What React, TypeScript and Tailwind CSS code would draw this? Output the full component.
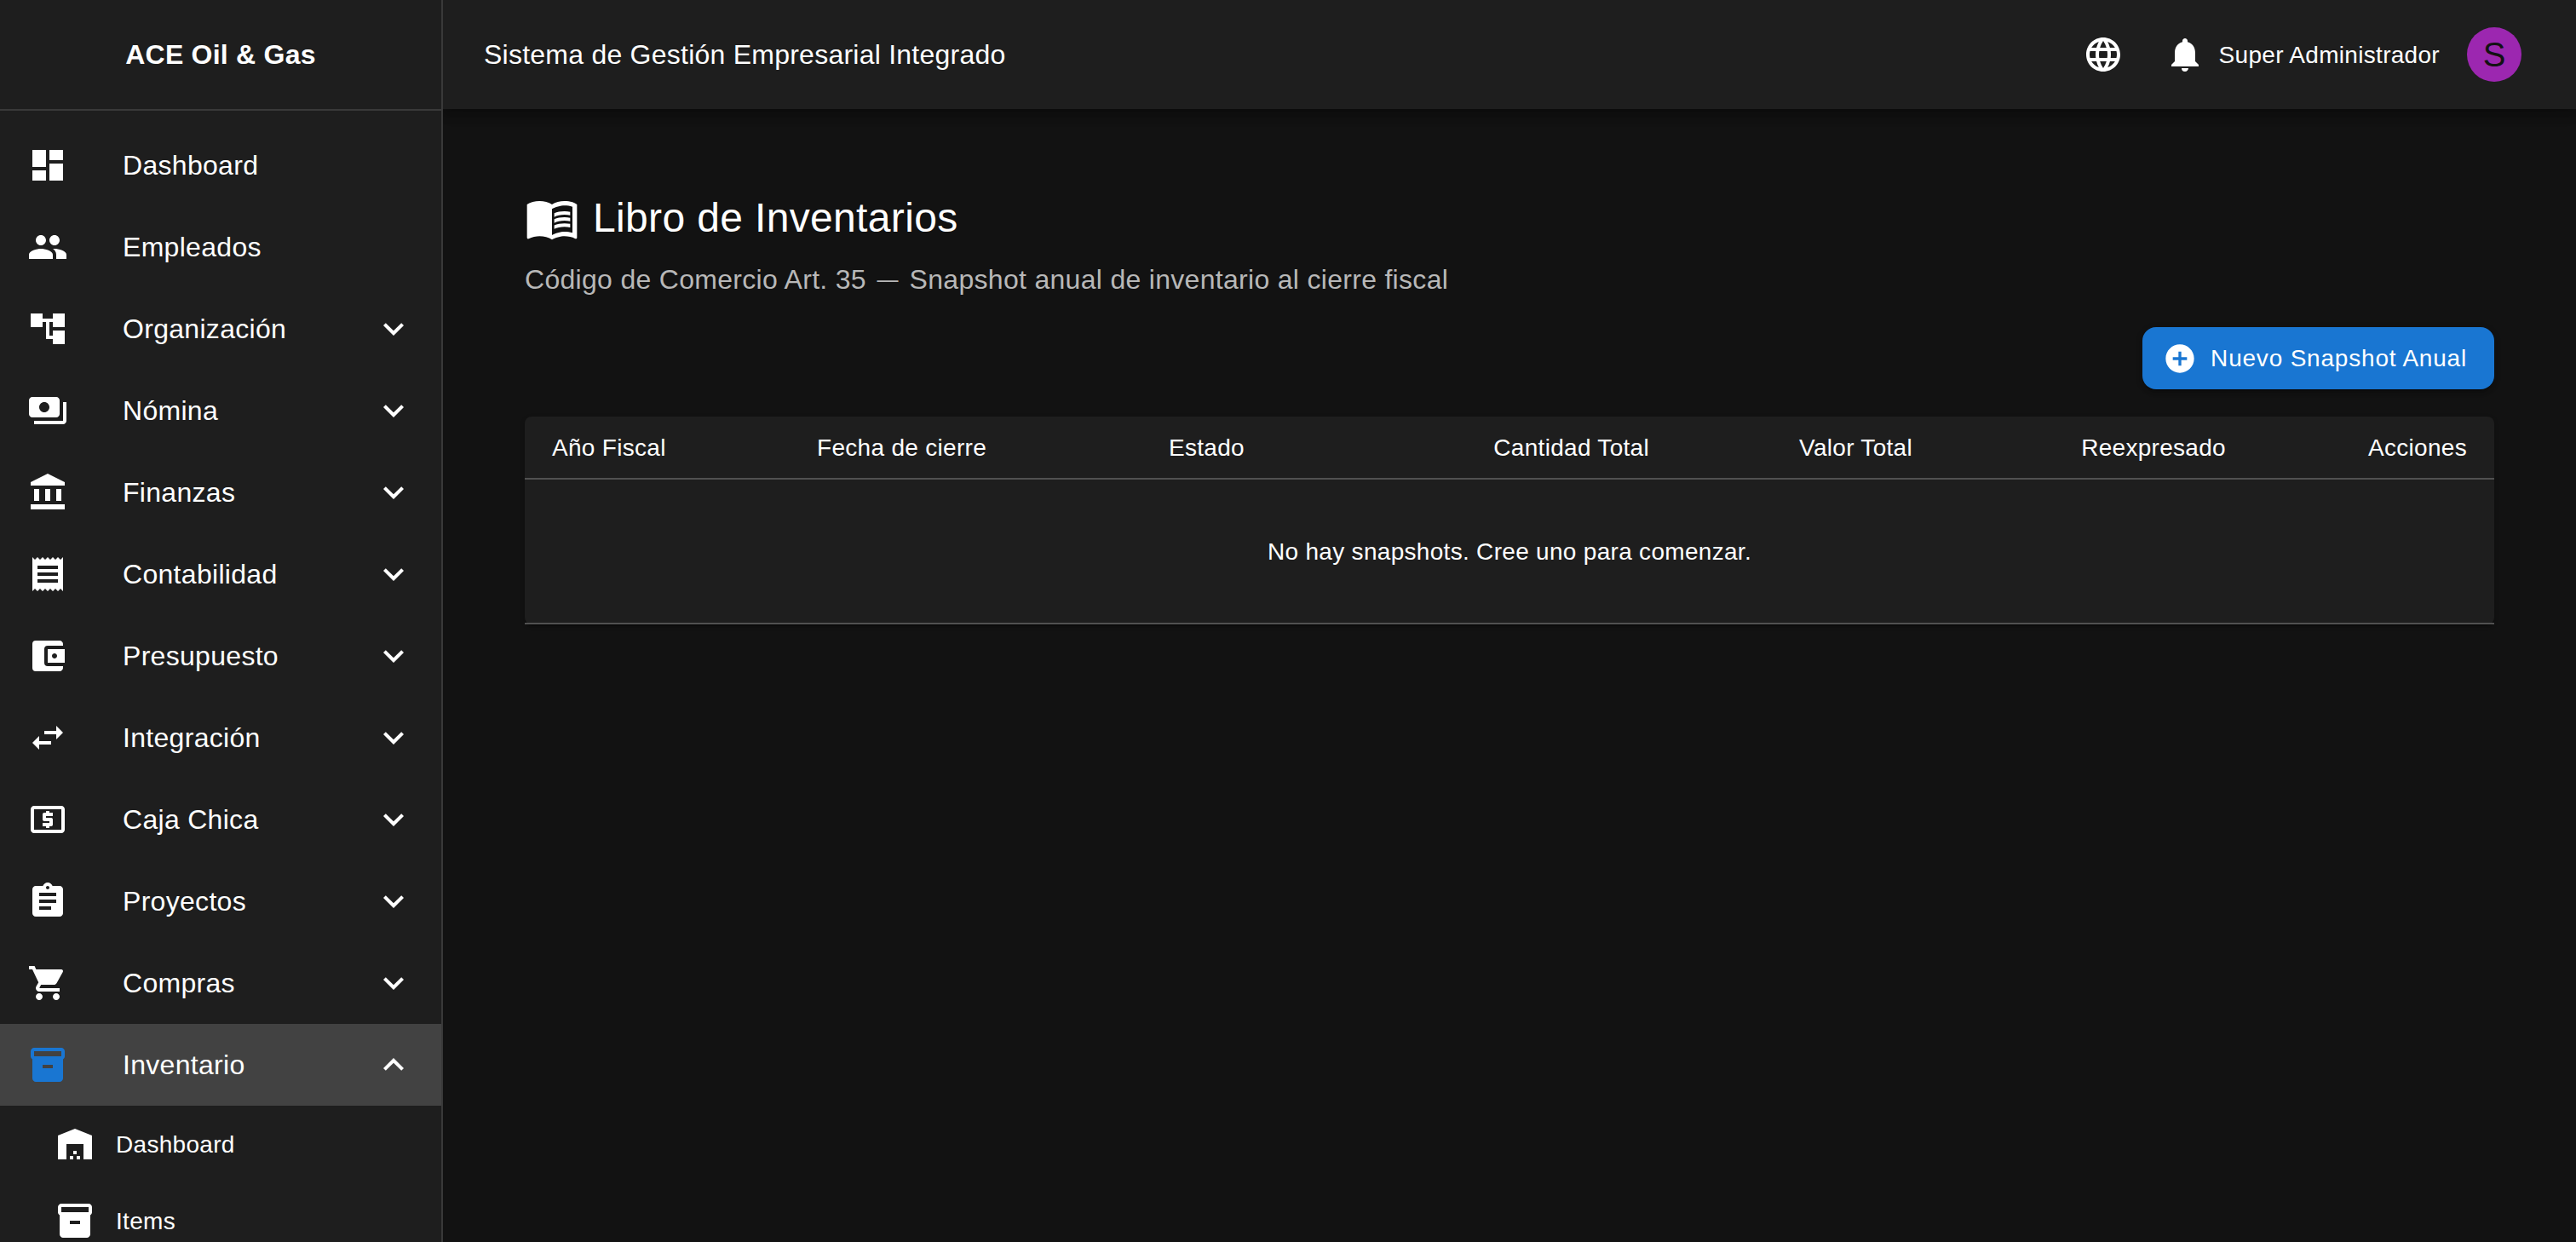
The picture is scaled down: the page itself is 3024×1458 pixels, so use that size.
import {
    MdAccountBalance,
    MdAccountBalanceWallet,
    MdAccountTree,
    MdAddCircle,
    MdAssignment,
    MdDashboard,
    MdExpandLess,
    MdExpandMore,
    MdInventory2,
    MdLanguage,
    MdLocalAtm,
    MdNotifications,
    MdPayments,
    MdPeople,
    MdReceipt,
    MdShoppingCart,
    MdSwapHoriz,
    MdWarehouse,
} from "react-icons/md";

const menu = [
    { label: "Dashboard", icon: MdDashboard },
    { label: "Empleados", icon: MdPeople },
    { label: "Organización", icon: MdAccountTree, expandable: true },
    { label: "Nómina", icon: MdPayments, expandable: true },
    { label: "Finanzas", icon: MdAccountBalance, expandable: true },
    { label: "Contabilidad", icon: MdReceipt, expandable: true },
    { label: "Presupuesto", icon: MdAccountBalanceWallet, expandable: true },
    { label: "Integración", icon: MdSwapHoriz, expandable: true },
    { label: "Caja Chica", icon: MdLocalAtm, expandable: true },
    { label: "Proyectos", icon: MdAssignment, expandable: true },
    { label: "Compras", icon: MdShoppingCart, expandable: true },
    { label: "Inventario", icon: MdInventory2, expandable: true, open: true },
];

const subMenu = [
    { label: "Dashboard", icon: MdWarehouse },
    { label: "Items", icon: MdInventory2 },
];

const columns = [
    { label: "Año Fiscal", className: "w-[311px] text-left" },
    { label: "Fecha de cierre", className: "w-[413px] text-left" },
    { label: "Estado", className: "w-[260px] text-left" },
    { label: "Cantidad Total", className: "w-[368px] text-right" },
    { label: "Valor Total", className: "w-[309px] text-right" },
    { label: "Reexpresado", className: "w-[368px] text-right" },
    { label: "Acciones", className: "w-[283px] text-right" },
];

// Open book with a solid left page
function BookIcon({ className }: { className?: string }) {
    return (
        <svg viewBox="0 0 24 24" fill="currentColor" className={className}>
            <path d="M21 5c-1.11-.35-2.33-.5-3.5-.5-1.95 0-4.05.4-5.5 1.5-1.45-1.1-3.55-1.5-5.5-1.5S2.45 4.9 1 6v14.65c0 .25.25.5.5.5.1 0 .15-.05.25-.05C3.1 20.45 5.05 20 6.5 20c1.95 0 4.05.4 5.5 1.5 1.35-.85 3.8-1.5 5.5-1.5 1.65 0 3.35.3 4.75 1.05.1.05.15.05.25.05.25 0 .5-.25.5-.5V6c-.6-.45-1.25-.75-2-1zm0 13.5c-1.1-.35-2.3-.5-3.5-.5-1.7 0-4.15.65-5.5 1.5V8c1.35-.85 3.8-1.5 5.5-1.5 1.2 0 2.4.15 3.5.5v11.5z" />
            <path d="M17.5 10.5c.88 0 1.73.09 2.5.26V9.24c-.79-.15-1.64-.24-2.5-.24-1.7 0-3.24.29-4.5.83v1.66c1.13-.64 2.7-.99 4.5-.99zM13 12.49v1.66c1.13-.64 2.7-.99 4.5-.99.88 0 1.73.09 2.5.26V11.9c-.79-.15-1.64-.24-2.5-.24-1.7 0-3.24.3-4.5.83zM17.5 14.33c-1.7 0-3.24.29-4.5.83v1.66c1.13-.64 2.7-.99 4.5-.99.88 0 1.73.09 2.5.26v-1.52c-.79-.16-1.64-.24-2.5-.24z" />
        </svg>
    );
}

function Sidebar() {
    return (
        <aside className="relative z-20 flex h-full w-[520px] shrink-0 flex-col overflow-hidden border-r-2 border-[#393939] bg-[#1e1e1e]">
            <div className="flex h-[130px] shrink-0 items-center justify-center border-b-2 border-[#393939]">
                <span className="text-[32px] leading-[51px] font-bold tracking-[0.24px]">ACE Oil &amp; Gas</span>
            </div>
            <nav className="pt-4">
                {menu.map(({ label, icon: Icon, expandable, open }) => (
                    <div
                        key={label}
                        className={`flex h-24 cursor-pointer items-center px-8 ${open ? "bg-[#424242]" : ""}`}
                    >
                        <div className="w-28">
                            <Icon className={`size-12 ${open ? "text-[#1976d2]" : ""}`} />
                        </div>
                        <span className="flex-1 text-[32px] leading-[48px] tracking-[0.3px]">{label}</span>
                        {expandable && (open ? <MdExpandLess className="size-12" /> : <MdExpandMore className="size-12" />)}
                    </div>
                ))}
                {/* Inventario submenu */}
                {subMenu.map(({ label, icon: Icon }) => (
                    <div key={label} className="flex h-[90px] cursor-pointer items-center pr-8 pl-16">
                        <div className="w-[72px]">
                            <Icon className="size-12" />
                        </div>
                        <span className="pt-0.5 text-[28px] leading-[40px] tracking-[0.3px]">{label}</span>
                    </div>
                ))}
            </nav>
        </aside>
    );
}

function TopBar() {
    return (
        <header className="relative z-10 flex h-32 shrink-0 items-center bg-[#1e1e1e] pr-16 pl-12 shadow-[0_4px_8px_-2px_rgba(0,0,0,0.2),0_8px_10px_0_rgba(0,0,0,0.14),0_2px_20px_0_rgba(0,0,0,0.12)]">
            <h1 className="flex-1 text-[32px] leading-[51px] tracking-[0.24px]">Sistema de Gestión Empresarial Integrado</h1>
            <button className="mr-4 p-4">
                <MdLanguage className="size-12" />
            </button>
            <button className="p-4">
                <MdNotifications className="size-12" />
            </button>
            <span className="mr-8 pt-0.5 text-[28px] leading-[40px] tracking-[0.3px]">Super Administrador</span>
            <div className="flex size-16 items-center justify-center rounded-full bg-[#9c27b0] text-[40px] leading-none text-[#121212]">
                S
            </div>
        </header>
    );
}

function SnapshotTable() {
    return (
        <div className="rounded-lg bg-[#1e1e1e] shadow-[0_4px_2px_-2px_rgba(0,0,0,0.2),0_2px_2px_0_rgba(0,0,0,0.14),0_2px_6px_0_rgba(0,0,0,0.12)]">
            <table className="w-full table-fixed border-separate border-spacing-0 text-[28px] tracking-[0.3px]">
                <thead>
                    <tr>
                        {columns.map(({ label, className }) => (
                            <th
                                key={label}
                                className={`border-b-2 border-[#515151] px-8 pt-[13px] pb-[11px] leading-[48px] font-normal ${className}`}
                            >
                                {label}
                            </th>
                        ))}
                    </tr>
                </thead>
                <tbody>
                    <tr>
                        <td colSpan={columns.length} className="border-b-2 border-[#515151] px-8 pt-[65px] pb-[63px] text-center leading-[40px]">
                            No hay snapshots. Cree uno para comenzar.
                        </td>
                    </tr>
                </tbody>
            </table>
        </div>
    );
}

export default function App() {
    return (
        <div className="flex h-screen w-full overflow-hidden bg-[#121212] font-['Liberation_Sans',Arial,sans-serif] text-white">
            <Sidebar />
            <div className="flex min-w-0 flex-1 flex-col">
                <TopBar />
                <main className="flex-1 px-24 pt-24">
                    {/* Page heading */}
                    <div className="flex h-16 items-center gap-4">
                        <BookIcon className="size-16" />
                        <h2 className="text-[48px] leading-[64px] tracking-[0.35px]">Libro de Inventarios</h2>
                    </div>
                    <p className="mt-4 h-12 text-[32px] leading-[48px] tracking-[0.3px] text-[#b8b8b8]">
                        Código de Comercio Art. 35{" "}
                        <span className="inline-block w-[32.3px] text-center align-[2px] text-[25px] leading-none">—</span>{" "}
                        Snapshot anual de inventario al cierre fiscal
                    </p>
                    <div className="mt-8 mb-8 flex justify-end">
                        <button className="flex h-[73px] items-center gap-4 rounded-2xl bg-[#1976d2] pr-8 pl-6 text-[28px] leading-[49px] tracking-[0.8px] shadow-[0_6px_2px_-4px_rgba(0,0,0,0.2),0_4px_4px_0_rgba(0,0,0,0.14),0_2px_10px_0_rgba(0,0,0,0.12)]">
                            <MdAddCircle className="size-10" />
                            Nuevo Snapshot Anual
                        </button>
                    </div>
                    <SnapshotTable />
                </main>
            </div>
        </div>
    );
}
